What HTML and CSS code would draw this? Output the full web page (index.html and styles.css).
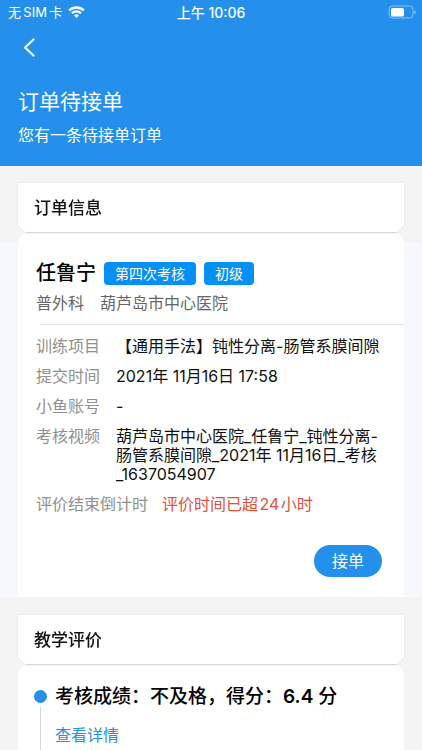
FILE: index.html
```html
<!DOCTYPE html>
<html lang="zh-CN">
<head>
<meta charset="utf-8">
<meta name="viewport" content="width=device-width, initial-scale=1">
<title>订单待接单</title>
<link rel="stylesheet" href="styles.css">
</head>
<body>
<header class="hero">
  <div class="status">
    <div class="status-left">
      <span>无&thinsp;SIM&thinsp;卡</span>
      <svg class="wifi" viewBox="0 0 17 12" aria-hidden="true">
        <path d="M1.200 4.500a10.400 10.400 0 0 1 14.600 0" fill="none" stroke="#fff" stroke-width="2.300"/>
        <path d="M3.900 7.300a6.600 6.600 0 0 1 9.200 0" fill="none" stroke="#fff" stroke-width="2.200"/>
        <path d="M8.500 12 6 9.400a3.600 3.600 0 0 1 5 0z" fill="#fff"/>
      </svg>
    </div>
    <time class="clock">上午 10:06</time>
    <div class="status-right">
      <svg class="battery" viewBox="0 0 28 14" aria-hidden="true">
        <rect x="1" y="1" width="24" height="12" rx="3.5" fill="none" stroke="#fff" stroke-opacity=".45"/>
        <rect x="3" y="3" width="13" height="8.5" rx="1.5" fill="#fff"/>
        <path d="M26.400 5v4.400q1.200-.7 1.200-2.200T26.400 5z" fill="#fff" fill-opacity=".5"/>
      </svg>
    </div>
  </div>
  <button class="back" type="button" aria-label="返回">
    <svg viewBox="0 0 12 20" aria-hidden="true"><path d="M10.500 1.500 2 9.500 10.500 17.500" fill="none" stroke="#fff" stroke-width="2.200" stroke-linecap="round" stroke-linejoin="round"/></svg>
  </button>
  <h1>订单待接单</h1>
  <p class="sub">您有一条待接单订单</p>
</header>

<main>
  <section>
    <div class="card-head"><h2>订单信息</h2></div>
    <div class="band band-cool">
      <div class="card order">
        <div class="person">
          <h3>任鲁宁</h3>
          <span class="tag">第四次考核</span>
          <span class="tag">初级</span>
        </div>
        <p class="unit"><span>普外科</span><span>葫芦岛市中心医院</span></p>
        <dl class="rows">
          <div><dt>训练项目</dt><dd>【通用手法】钝性分离-肠管系膜间隙</dd></div>
          <div><dt>提交时间</dt><dd>2021年 11月16日 17:58</dd></div>
          <div><dt>小鱼账号</dt><dd>-</dd></div>
          <div><dt>考核视频</dt><dd>葫芦岛市中心医院_任鲁宁_钝性分离-肠管系膜间隙_2021年 11月16日_考核_1637054907</dd></div>
          <div class="late"><dt>评价结束倒计时</dt><dd>评价时间已超&hairsp;24&hairsp;小时</dd></div>
        </dl>
        <div class="actions"><button class="accept" type="button">接单</button></div>
      </div>
    </div>
  </section>

  <section class="review">
    <div class="card-head"><h2>教学评价</h2></div>
    <div class="band">
      <div class="card timeline">
        <div class="track"></div>
        <div class="entry">
          <h3>考核成绩：不及格，得分：<b>6.4</b> 分</h3>
          <a href="#detail">查看详情</a>
        </div>
      </div>
    </div>
  </section>
</main>
</body>
</html>
```
FILE: styles.css
```css
* { box-sizing: border-box; }
body, h1, h2, h3, p, dl, dd { margin: 0; }
body {
  min-height: 100vh;
  display: flex;
  flex-direction: column;
  background: #f4f4f4;
  color: #111;
  font: 16px/19px Inter, "Noto Sans CJK SC", sans-serif;
}
h1, h2, h3 { font-weight: 500; }
h3 { color: #000; }
b { font-weight: 600; }
button { border: 0; font: inherit; color: #fff; cursor: pointer; }
a { color: #2490ec; text-decoration: none; }

.hero {
  background: #2490ec;
  color: #fff;
  padding: 0 18px 19px;
}
.status {
  display: grid;
  grid-template-columns: 1fr auto 1fr;
  align-items: center;
  height: 24px;
  margin: 0 -12px;
  font-size: 13px;
}
.status-left { display: flex; align-items: center; gap: 6px; padding-left: 2px; }
.status-right { display: flex; justify-content: flex-end; }
.clock { font-weight: 500; font-size: 14px; }
.wifi { width: 17px; height: 12px; }
.battery { width: 28px; height: 14px; }
.back {
  display: block;
  background: none;
  height: 48px;
  padding: 0 5px;
}
.back svg { display: block; width: 12px; height: 20px; }
h1 { font-size: 21px; line-height: 30px; font-weight: 400; margin-top: 15px; }
.sub { line-height: 24px; margin-top: 6px; }

main { flex: 1; display: flex; flex-direction: column; padding-top: 17px; }
.card-head {
  position: relative;
  margin: 0 18px;
  filter: drop-shadow(0 0 1px rgba(0, 0, 0, .08));
}
.card-head h2 {
  padding: 0 16px;
  background: #fff;
  font-size: 17px;
  line-height: 50px;
  clip-path: polygon(0 0, 100% 0, 100% 42px, calc(100% - 8px) 100%, 8px 100%, 0 42px);
}
.card-head::after {
  content: "";
  position: absolute;
  left: 8px;
  right: 8px;
  bottom: 0;
  height: 1px;
  background: #d6d6d6;
}
.band { padding: 0 18px; }
.band-cool { background: linear-gradient(#f4f4f4 9px, #f6f8fb 9px); }
.card { background: #fff; border-radius: 10px 10px 0 0; }

.order { padding: 26px 18px 20px; }
.person { display: flex; align-items: center; gap: 8px; }
.person h3 { font-size: 20px; line-height: 28px; }
.tag {
  background: #0590f5;
  color: #fff;
  border-radius: 4px;
  padding: 0 11px;
  font-size: 14px;
  line-height: 23px;
}
.unit {
  display: flex;
  gap: 16px;
  margin: 0 -18px 0 4px;
  padding: 7px 0 11px;
  border-bottom: 1px solid #e2e2e2;
  color: #666;
}
.unit span:first-child { margin-left: -4px; }
.rows { padding-top: 12px; display: grid; gap: 11px; }
.rows div { display: flex; gap: 16px; }
.rows dt { flex: none; color: #909090; }
.late dt { margin-right: -2px; }
.late dd { color: #e0523a; }
.actions { display: flex; justify-content: flex-end; margin-top: 31px; padding-right: 4px; }
.accept {
  background: #2490ec;
  border-radius: 16px;
  padding: 0 18px;
  line-height: 32px;
}

.review { flex: 1; display: flex; flex-direction: column; margin-top: 18px; }
.review .band { flex: 1; display: flex; }
.timeline { flex: 1; display: flex; gap: 8px; padding: 17px 16px 0; }
.track { width: 13px; display: flex; flex-direction: column; align-items: center; gap: 4px; padding-top: 8px; }
.track::before { content: ""; width: 13px; height: 13px; border-radius: 50%; background: #2490ec; }
.track::after { content: ""; flex: 1; width: 1px; background: #d6d6d6; }
.entry h3 { font-size: 19px; line-height: 30px; }
.entry a { display: block; margin-top: 14px; }
```
